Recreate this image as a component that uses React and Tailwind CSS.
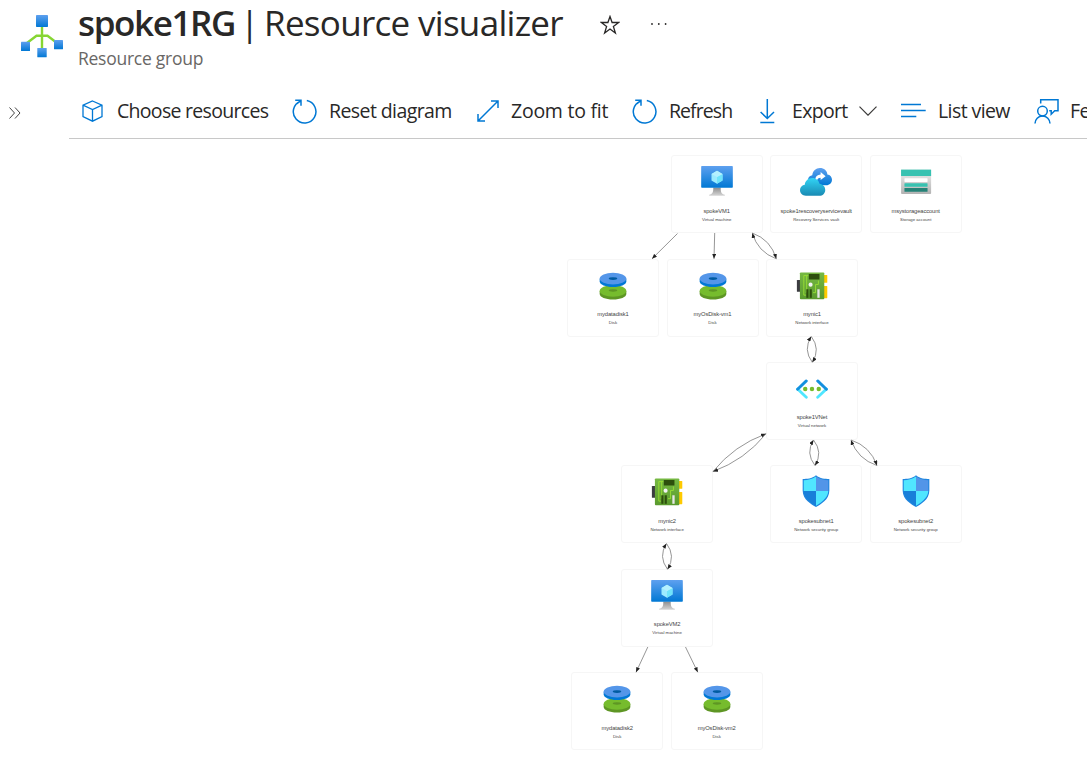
import React from "react";

const UI = "font-['Open_Sans','Noto_Sans',sans-serif]";

function SpokeIcon() {
  return (
    <svg viewBox="0 0 42 43" className="h-[43px] w-[42px]">
      <defs>
        <linearGradient id="sq" x1="0" y1="0" x2="0" y2="1">
          <stop offset="0" stopColor="#5ea0ef" />
          <stop offset="1" stopColor="#0078d4" />
        </linearGradient>
      </defs>
      <path d="M21 12V34M6 28L15.5 20.8H26.5L36 28" fill="none" stroke="#86d633" strokeWidth="2.4" />
      <rect x="15" y="0" width="12" height="12" rx=".7" fill="url(#sq)" />
      <rect x="0" y="26.7" width="9" height="9.3" rx=".6" fill="url(#sq)" />
      <rect x="16.3" y="33" width="9.4" height="9.3" rx=".6" fill="url(#sq)" />
      <rect x="33" y="25" width="9" height="9.3" rx=".6" fill="url(#sq)" />
    </svg>
  );
}

const line = { fill: "none", stroke: "#0078d4", strokeWidth: 1.5 };

function CubeIcon() {
  return (
    <svg viewBox="0 0 22 22" className="h-[22px] w-[22px]">
      <path d="M10.5 1L20 5.2V16.6L10.5 21.2L1 16.6V5.2ZM1 5.2L10.5 9.6L20 5.2M10.5 9.6V21.2" {...line} strokeWidth="1.3" />
    </svg>
  );
}
function RefreshIcon() {
  return (
    <svg viewBox="0 0 25 25" className="h-[25px] w-[25px]">
      <path d="M14.8 1.6A11.3 11.3 0 1 1 8.4 2.2M3.2 1.2H9V6.8M9 1.4L5 4.6" {...line} />
    </svg>
  );
}
function FitIcon() {
  return (
    <svg viewBox="0 0 22 22" className="h-[22px] w-[22px]">
      <path d="M1 21L21 1M14 1H21V8M1 14V21H8" {...line} />
    </svg>
  );
}
function DownloadIcon() {
  return (
    <svg viewBox="0 0 15 25" className="h-[25px] w-[15px]">
      <path d="M7.3 0V19.5M.6 13L7.3 19.5L14 13M.3 23.5H14.3" {...line} />
    </svg>
  );
}
function ListIcon() {
  return (
    <svg viewBox="0 0 25 16" className="h-[16px] w-[25px]">
      <path d="M0 1.5H20M0 7.5H24.7M0 13.5H15.3" {...line} strokeWidth="1.6" />
    </svg>
  );
}
function FeedbackIcon() {
  return (
    <svg viewBox="0 0 25 25" className="h-[25px] w-[25px]">
      <path d="M6.7 4.5V.8H24V11.8H20.7L17.2 15.2V11.8H15.2M1 24.6A7.5 7.5 0 0 1 16 24.6" {...line} />
      <circle cx="8.5" cy="12.1" r="4.8" {...line} />
    </svg>
  );
}

function VmArt() {
  return (
    <>
      <path d="M6.9 12.6H11.1C11 15.4 11.6 16.2 13.4 16.8V17.3H4.6V16.8C6.4 16.2 7 15.4 6.9 12.6Z" fill="url(#gGrey)" />
      <rect x=".1" y=".6" width="17.8" height="12.2" rx=".4" fill="url(#gBlue)" />
      <path d="M9 3.2L12.1 5V8.7L9 10.5L5.9 8.7V5Z" fill="#9cebff" />
      <path d="M9 6.8L12.1 5V8.7L9 10.5Z" fill="#6fe4fb" />
      <path d="M9 3.2L12.1 5L9 6.8L5.9 5Z" fill="#b4f0ff" />
    </>
  );
}
function DiskArt() {
  return (
    <>
      <path d="M1.5 12.4V14C1.5 15.7 4.8 17.1 9 17.1S16.5 15.7 16.5 14V12.4Z" fill="#5e9624" />
      <ellipse cx="9" cy="12.3" rx="7.5" ry="3.3" fill="#76bc2d" />
      <ellipse cx="9" cy="12.1" rx="2.4" ry=".65" fill="#5e9624" />
      <path d="M1.5 5.5V7C1.5 8.7 4.8 10.1 9 10.1S16.5 8.7 16.5 7V5.5Z" fill="#0078d4" />
      <ellipse cx="9" cy="5.4" rx="7.5" ry="3.3" fill="#5496e9" />
      <ellipse cx="9" cy="5.4" rx="2.4" ry=".8" fill="#005ba1" />
    </>
  );
}
function NicArt() {
  return (
    <>
      <rect x=".5" y="6.2" width="2.2" height="6.6" rx=".3" fill="#3c3c41" />
      <rect x="15.3" y="3.4" width="2.3" height="4.4" rx=".3" fill="#ffca00" />
      <rect x="15.3" y="9.6" width="2.3" height="6.8" rx=".3" fill="#ffca00" />
      <rect x="2.2" y="1.9" width="13.7" height="15.1" rx=".5" fill="url(#gGreen)" />
      <path d="M7 3.7H4.4V14.7H5.6M6 3.8V13H5.4M12.6 6.5V8.7H11V13.3H9.6" fill="none" stroke="#9be034" strokeWidth=".5" />
      <rect x="7.2" y="2.8" width="6" height="3.1" fill="#2d4f0d" />
      <circle cx="8.2" cy="8.8" r="1.15" fill="#f2f2f2" />
      <rect x="5.8" y="11.4" width="1.2" height="4.8" fill="#2d4f0d" />
      <rect x="7.7" y="11.4" width="1.2" height="4.8" fill="#2d4f0d" />
      <rect x="12" y="11.4" width="1.3" height="4.8" fill="#e6e6e6" />
    </>
  );
}
function VnetArt() {
  return (
    <>
      <g fill="none" strokeWidth="1.6">
        <path d="M.9 9.6L5.8 14.2M17.1 9.6L12.2 14.2" stroke="#50e6ff" strokeLinecap="round" />
        <path d="M5.8 5L.9 9.7M12.2 5L17.1 9.7" stroke="#1490df" strokeLinecap="round" />
      </g>
      <g fill="#76bc2d">
        <circle cx="5.2" cy="9.6" r="1.25" />
        <circle cx="9" cy="9.6" r="1.25" />
        <circle cx="12.8" cy="9.6" r="1.25" />
      </g>
    </>
  );
}
function ShieldArt() {
  return (
    <>
      <path d="M9 .2C11.4 2.1 14 2.3 16.5 2.3V8.7C16.5 14 11.5 16.5 9 18C6.5 16.5 1.5 14 1.5 8.7V2.3C4 2.3 6.6 2.1 9 .2Z" fill="#1f85de" />
      <path d="M9 .9V9H2.1V2.9C4.5 2.9 6.8 2.5 9 .9Z" fill="#50e6ff" />
      <path d="M9 .9V9H15.9V2.9C13.5 2.9 11.2 2.5 9 .9Z" fill="#5295e8" />
      <path d="M9 9H15.9C15.7 13.3 11.2 15.9 9 17.3Z" fill="#50e6ff" />
      <path d="M9 9H2.1C2.3 13.3 6.8 15.9 9 17.3Z" fill="#187fd9" />
    </>
  );
}
function VaultArt() {
  return (
    <>
      <path d="M6 11.2C4.7 10.5 4.3 9.2 4.5 8.1C4.7 6.8 5.7 5.9 6.9 5.8C7.1 3.3 9 1.7 11.2 1.7C13.5 1.7 15.2 3.2 15.4 5.3C17 5.5 18 6.8 18 8.3C18 10 16.6 11.4 14.8 11.4Z" fill="url(#gBlue)" />
      <path d="M8.6 8.6C8.6 6.4 9.8 5.4 11.6 5.3V4L14.4 6.3L11.6 8.5V7.2C10.4 7.2 9.7 7.8 9.6 8.8Z" fill="#fff" />
      <path d="M3.3 17.3C1.4 17.3 0 15.9 0 14.1C0 12.5 1.2 11.3 2.7 11.1C2.9 8.9 4.6 7.3 6.9 7.3C9 7.3 10.6 8.7 11 10.6C12.8 10.8 14.2 12.2 14.2 14C14.2 15.9 12.7 17.3 10.9 17.3Z" fill="url(#gCyan)" />
    </>
  );
}
function StorageArt() {
  return (
    <>
      <rect x=".6" y="2.6" width="16.9" height="13.7" rx=".5" fill="url(#gLightGrey)" />
      <rect x=".6" y="2.6" width="16.9" height="3.6" fill="#37c2b1" />
      <rect x="2.5" y="7.4" width="13" height="2.1" rx=".3" fill="#fff" />
      <rect x="2.5" y="10.2" width="13" height="2" rx=".3" fill="#37c2b1" />
      <rect x="2.5" y="12.9" width="13" height="2.1" rx=".3" fill="#258277" />
    </>
  );
}

const arts = { vm: VmArt, disk: DiskArt, nic: NicArt, vnet: VnetArt, shield: ShieldArt, vault: VaultArt, storage: StorageArt };

const nodes = [
  { x: 670.7, y: 16, art: "vm", name: "spokeVM1", kind: "Virtual machine" },
  { x: 770.2, y: 16, art: "vault", name: "spoke1rescoveryservicevault", kind: "Recovery Services vault" },
  { x: 869.7, y: 16, art: "storage", name: "msystorageaccount", kind: "Storage account" },
  { x: 567, y: 119.5, art: "disk", name: "mydatadisk1", kind: "Disk" },
  { x: 666.5, y: 119.5, art: "disk", name: "myOsDisk-vm1", kind: "Disk" },
  { x: 766, y: 119.5, art: "nic", name: "mynic1", kind: "Network interface" },
  { x: 766, y: 222.9, art: "vnet", name: "spoke1VNet", kind: "Virtual network" },
  { x: 621.1, y: 326.4, art: "nic", name: "mynic2", kind: "Network interface" },
  { x: 770.2, y: 326.4, art: "shield", name: "spokesubnet1", kind: "Network security group" },
  { x: 869.7, y: 326.4, art: "shield", name: "spokesubnet2", kind: "Network security group" },
  { x: 621.1, y: 429.8, art: "vm", name: "spokeVM2", kind: "Virtual machine" },
  { x: 571.2, y: 533.2, art: "disk", name: "mydatadisk2", kind: "Disk" },
  { x: 670.7, y: 533.2, art: "disk", name: "myOsDisk-vm2", kind: "Disk" },
];

const straight = [
  [677.5, 94.5, 652, 119.8],
  [714.7, 94, 714, 119.8],
  [647.8, 508, 636, 533.3],
  [685.5, 508, 697.8, 533.3],
];
const pairs = [
  [752.3, 94, 776.3, 119.8, 4.5],
  [811.3, 197.5, 812.3, 223.3, 4.5],
  [766, 294.8, 713, 332.5, 4.5],
  [813.5, 301, 815, 326.5, 4.5],
  [851, 301, 877, 326.5, 4.5],
  [666.5, 404.5, 667.5, 430.3, 4.5],
];

// Quadratic curve whose middle sits `b` pixels off the straight line.
function bow([x1, y1, x2, y2, b]) {
  const dx = x2 - x1, dy = y2 - y1, len = Math.hypot(dx, dy);
  const cx = (x1 + x2) / 2 - (dy / len) * 2 * b;
  const cy = (y1 + y2) / 2 + (dx / len) * 2 * b;
  return `M${x1} ${y1}Q${cx} ${cy} ${x2} ${y2}`;
}

function Gradient({ id, from, to }) {
  return (
    <linearGradient id={id} x1="0" y1="0" x2="0" y2="1">
      <stop offset="0" stopColor={from} />
      <stop offset="1" stopColor={to} />
    </linearGradient>
  );
}

function Edges() {
  return (
    <svg viewBox="0 0 1087 626" className="absolute top-0 left-0 h-[626px] w-[1087px]">
      <defs>
        <Gradient id="gBlue" from="#5ea0ef" to="#0078d4" />
        <Gradient id="gGrey" from="#8c8c8c" to="#d6d6d6" />
        <Gradient id="gLightGrey" from="#f0f0f0" to="#b3b3b3" />
        <Gradient id="gGreen" from="#76b943" to="#5a9a2e" />
        <Gradient id="gCyan" from="#32d4f5" to="#198ab3" />
        <marker id="tip" viewBox="0 0 5 4" refX="5" refY="2" markerWidth="5" markerHeight="4" markerUnits="userSpaceOnUse" orient="auto-start-reverse">
          <path d="M0 0L5 2L0 4Z" fill="#222" />
        </marker>
      </defs>
      <g fill="none" stroke="#8a8a8a" strokeWidth=".9">
        {straight.map(([a, b, c, d]) => (
          <path key={a} d={`M${a} ${b}L${c} ${d}`} markerEnd="url(#tip)" />
        ))}
        {pairs.map(([a, b, c, d, k]) => (
          <React.Fragment key={a}>
            <path d={bow([a, b, c, d, k])} markerStart="url(#tip)" />
            <path d={bow([a, b, c, d, -k])} markerEnd="url(#tip)" />
          </React.Fragment>
        ))}
      </g>
    </svg>
  );
}

function Node({ x, y, art, name, kind }) {
  const Art = arts[art];
  return (
    <div
      className="absolute flex h-[78px] w-[92px] flex-col items-center rounded-[3px] border border-[#f6f6f6] bg-white pt-[9px] font-['Liberation_Sans',sans-serif] whitespace-nowrap text-[#444]"
      style={{ left: x, top: y }}
    >
      <svg viewBox="0 0 18 18" className="h-8 w-8 shrink-0"><Art /></svg>
      <div className="mt-[9.5px] text-[5.8px] leading-[8px] tracking-[-0.02em]">{name}</div>
      <div className="mt-[1px] text-[4.3px] leading-[7px]">{kind}</div>
    </div>
  );
}

function Tool({ icon, label, className, labelClass }) {
  return (
    <button className={`flex h-full shrink-0 items-center text-left ${className}`}>
      {icon}
      <span className={`block shrink-0 text-[19.5px] leading-7 ${labelClass}`}>{label}</span>
    </button>
  );
}

export default function App() {
  return (
    <div className={`h-[765px] w-[1087px] overflow-hidden bg-white whitespace-nowrap text-[#292827] ${UI}`}>
      <header className="flex h-[84px] pl-[21px]">
        <div className="pt-[15px]"><SpokeIcon /></div>
        <div className="ml-[15px] w-[485px] shrink-0">
          <h1 className="flex text-[35px] leading-[46px]">
            <span className="w-[157px] font-semibold tracking-[-0.04em]">spoke1RG</span>
            <span className="ml-[5px] w-[8px]">|</span>
            <span className="ml-[16px] tracking-[-0.02em]">Resource visualizer</span>
          </h1>
          <p className="text-[17.5px] leading-6 tracking-[-0.015em] text-[#696765]">Resource group</p>
        </div>
        <svg viewBox="0 0 20 20" className="mt-[15px] ml-[37px] h-5 w-5">
          <path d="M10 1.5L12.1 7.5H18.7L13.4 11.4L15.4 18L10 14L4.6 18L6.6 11.4L1.3 7.5H7.9Z" fill="none" stroke="#292827" strokeWidth="1.3" />
        </svg>
        <svg viewBox="0 0 18 4" className="mt-[22px] ml-[30px] h-1 w-[18px]">
          <g fill="#292827"><circle cx="2" cy="2" r=".9" /><circle cx="8.8" cy="2" r=".9" /><circle cx="15.6" cy="2" r=".9" /></g>
        </svg>
      </header>

      <div className="flex h-[55px]">
        <div className="w-[69px] pt-[23px] pl-[9px]">
          <svg viewBox="0 0 12 12" className="h-3 w-3">
            <path d="M.5 .5L5.5 6L.5 11.5M6 .5L11 6L6 11.500" fill="none" stroke="#454545" strokeWidth="1" />
          </svg>
        </div>
        <nav className="flex w-[1018px] items-center overflow-hidden border-b border-[#c8c8c8] pl-[13px]">
          <Tool icon={<CubeIcon />} label="Choose resources" className="w-[210px]" labelClass="ml-[13px] tracking-[-0.036em]" />
          <Tool icon={<RefreshIcon />} label="Reset diagram" className="w-[185px]" labelClass="ml-[12px] tracking-[-0.03em]" />
          <Tool icon={<FitIcon />} label="Zoom to fit" className="w-[155px]" labelClass="ml-[12px] tracking-[-0.013em]" />
          <Tool icon={<RefreshIcon />} label="Refresh" className="w-[128px]" labelClass="ml-[12px] tracking-[-0.048em]" />
          <Tool icon={<DownloadIcon />} label="Export" className="w-[99px]" labelClass="ml-[17px] tracking-[-0.034em]" />
          <svg viewBox="0 0 18 10" className="mr-[23px] h-[10px] w-[18px] shrink-0">
            <path d="M.5 .7L9 9.2L17.5 .7" fill="none" stroke="#3b3a39" strokeWidth="1.2" />
          </svg>
          <Tool icon={<ListIcon />} label="List view" className="ml-px w-[133px]" labelClass="ml-[12px] tracking-[-0.03em]" />
          <Tool icon={<FeedbackIcon />} label="Feedback" className="w-[120px]" labelClass="ml-[11px] tracking-[-0.03em]" />
        </nav>
      </div>

      <main className="relative h-[626px] w-[1087px]">
        {nodes.map((n) => <Node key={n.name} {...n} />)}
        <Edges />
      </main>
    </div>
  );
}
